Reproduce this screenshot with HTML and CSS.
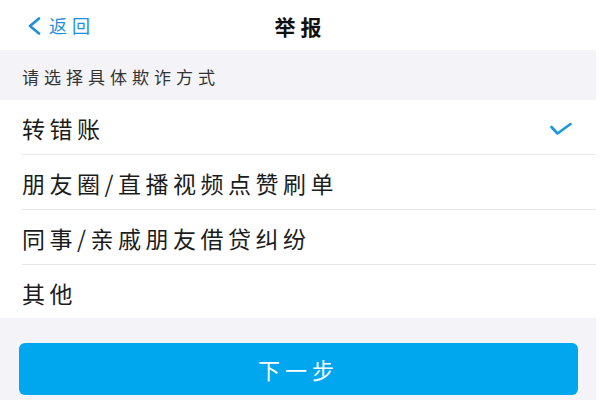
FILE: index.html
```html
<!DOCTYPE html>
<html lang="zh-CN">
<head>
    <meta charset="UTF-8">
    <meta name="viewport" content="width=device-width, initial-scale=1.0">
    <title>举报</title>
    <link rel="stylesheet" href="styles.css">
</head>
<body>
<div class="page">
    <div class="header">
        <a class="back" href="#">
            <svg class="back-icon" width="14" height="18" viewBox="0 0 14 18">
                <polyline points="12,1.5 3,9 12,16.5" fill="none" stroke="#1f8fdb" stroke-width="2.6" stroke-linecap="round" stroke-linejoin="round"/>
            </svg>
            <span>返回</span>
        </a>
        <h1 class="title">举报</h1>
        <div></div>
    </div>
    <div class="section-label">请选择具体欺诈方式</div>
    <ul class="options">
        <li class="option selected">
            <span>转错账</span>
            <svg class="check" width="22" height="14" viewBox="0 0 22 14">
                <polyline points="1.5,5 7.5,11.5 20.5,2" fill="none" stroke="#1e96dc" stroke-width="2.6" stroke-linecap="round" stroke-linejoin="round"/>
            </svg>
        </li>
        <li class="option"><span>朋友圈/直播视频点赞刷单</span></li>
        <li class="option"><span>同事/亲戚朋友借贷纠纷</span></li>
        <li class="option last"><span>其他</span></li>
    </ul>
    <div class="footer">
        <button class="next" type="button">下一步</button>
    </div>
</div>
</body>
</html>
```

FILE: styles.css
```css
body {
    margin: 0;
    background-color: #fff;
    font-family: "Noto Sans CJK SC", "Noto Sans", sans-serif;
}
.page {
    width: 596px;
    height: 400px;
    display: flex;
    flex-direction: column;
    background-color: #f4f4f8;
}
.header {
    height: 50px;
    background-color: #fff;
    display: grid;
    grid-template-columns: 1fr auto 1fr;
    align-items: center;
}
.back {
    display: flex;
    align-items: center;
    gap: 8px;
    padding-left: 27px;
    color: #1f8fdb;
    text-decoration: none;
    font-size: 18px;
    letter-spacing: 5px;
}
.back-icon {
    margin-top: 1px;
}
.title {
    margin: 0;
    font-size: 21px;
    font-weight: bold;
    letter-spacing: 5px;
    margin-right: -5px;
    color: #111;
    padding-top: 2px;
}
.section-label {
    height: 50px;
    padding-left: 22px;
    padding-top: 3px;
    box-sizing: border-box;
    display: flex;
    align-items: center;
    font-size: 17px;
    letter-spacing: 5px;
    color: #333;
}
.options {
    list-style-type: none;
    margin: 0;
    padding: 0;
    background-color: #fff;
}
.option {
    height: 55px;
    margin-left: 22px;
    padding-right: 24px;
    padding-top: 2px;
    box-sizing: border-box;
    border-bottom: 1px solid #e7e7ea;
    display: flex;
    align-items: center;
    justify-content: space-between;
    font-size: 23px;
    letter-spacing: 4.5px;
    color: #1c1c1c;
}
.option.last {
    height: 53px;
    border-bottom: none;
}
.check {
    margin-top: 2px;
}
.footer {
    flex: 1;
    padding: 25px 18px 0 19px;
}
.next {
    width: 100%;
    height: 52px;
    border: none;
    border-radius: 6px;
    background-color: #00a7ee;
    color: #fff;
    font-family: inherit;
    font-size: 22px;
    letter-spacing: 5px;
    cursor: pointer;
}
```
